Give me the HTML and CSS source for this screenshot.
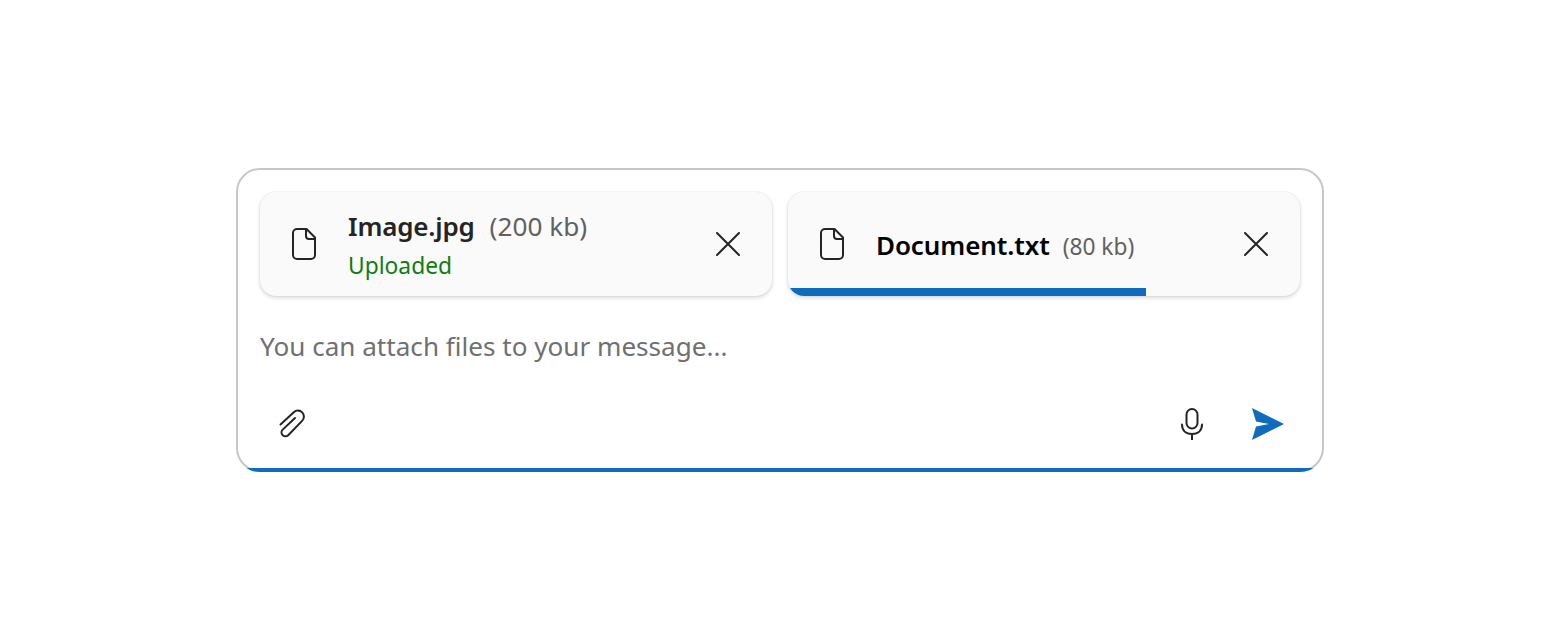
FILE: index.html
```html
<!DOCTYPE html>
<html lang="en">
<head>
<meta charset="utf-8">
<title>Message composer</title>
<link rel="stylesheet" href="styles.css">
</head>
<body>
<div class="composer">
  <div class="attachments">
    <div class="chip">
      <svg class="file-icon" viewBox="0 0 24 32" width="24" height="32" fill="none" stroke="#242424" stroke-width="2" stroke-linejoin="round"><path d="M5 1h9.500L23 9.500V27a4 4 0 0 1-4 4H5a4 4 0 0 1-4-4V5a4 4 0 0 1 4-4Z"/><path d="M14 1v7a3 3 0 0 0 3 3h6"/></svg>
      <div class="chip-body stacked">
        <div class="title-line"><span class="name">Image.jpg</span><span class="size">(200 kb)</span></div>
        <div class="status">Uploaded</div>
      </div>
      <svg class="close-icon" viewBox="0 0 24 24" width="24" height="24" fill="none" stroke="#242424" stroke-width="2" stroke-linecap="round"><path d="M1 1l22 22M23 1L1 23"/></svg>
    </div>
    <div class="chip">
      <svg class="file-icon" viewBox="0 0 24 32" width="24" height="32" fill="none" stroke="#242424" stroke-width="2" stroke-linejoin="round"><path d="M5 1h9.500L23 9.500V27a4 4 0 0 1-4 4H5a4 4 0 0 1-4-4V5a4 4 0 0 1 4-4Z"/><path d="M14 1v7a3 3 0 0 0 3 3h6"/></svg>
      <div class="chip-body">
        <div class="title-line compact"><span class="name dark">Document.txt</span><span class="size small">(80 kb)</span></div>
      </div>
      <svg class="close-icon" viewBox="0 0 24 24" width="24" height="24" fill="none" stroke="#242424" stroke-width="2" stroke-linecap="round"><path d="M1 1l22 22M23 1L1 23"/></svg>
      <div class="progress"></div>
    </div>
  </div>
  <div class="placeholder">You can attach files to your message...</div>
  <div class="toolbar">
    <svg class="clip" viewBox="0 0 26 30" width="26" height="30" fill="none" stroke="#242424" stroke-width="2" stroke-linecap="round"><path d="M1.500 15.500 14.800 3.200a6 6 0 0 1 8.400.200 6 6 0 0 1-.1 8.500L9.200 26.200a3.900 3.900 0 0 1-5.600-.1 3.900 3.900 0 0 1 .1-5.500L16 9"/></svg>
    <div class="spacer"></div>
    <svg class="mic" viewBox="0 0 22 32" width="22" height="32" fill="none" stroke="#242424" stroke-width="2" stroke-linecap="round"><rect x="5.500" y="1" width="11" height="19.500" rx="5.500"/><path d="M1 16.500C1 22.500 5 26 11 26s10-3.500 10-9.500M11 26v5.500"/></svg>
    <svg class="send" viewBox="0 0 32 32" width="32" height="32"><path d="M0 0 32 16 0 32 4 18.500 17 16 4 13.500Z" fill="#0f6cbd"/></svg>
  </div>
</div>
</body>
</html>
```
FILE: styles.css
```css
* { box-sizing: border-box; }
html, body { margin: 0; padding: 0; background: #fff; }
body {
  height: 640px;
  padding-top: 168px;
  font-family: "Noto Sans", "Open Sans", sans-serif;
}
.composer {
  position: relative;
  width: 1088px;
  height: 304px;
  margin: 0 auto;
  padding: 22px 22px 0;
  border: 2px solid #c7c7c7;
  border-radius: 24px;
  background: #fff;
}
.composer::after {
  content: "";
  position: absolute;
  inset: -2px;
  border-bottom: 4px solid #0f6cbd;
  border-radius: 24px;
  clip-path: inset(calc(100% - 4px) 0 0 0);
  pointer-events: none;
}
.attachments { display: flex; gap: 16px; }
.chip {
  position: relative;
  flex: 1;
  height: 104px;
  display: flex;
  align-items: center;
  padding: 0 32px;
  border-radius: 16px;
  background: #fafafa;
  box-shadow: 0 0 2px rgba(0,0,0,.12), 0 2px 4px rgba(0,0,0,.14);
  overflow: hidden;
}
.file-icon { flex: none; }
.chip-body { flex: 1; margin-left: 32px; padding-top: 4px; }
.chip-body.stacked { padding-top: 2px; }
.title-line { display: flex; align-items: baseline; gap: 15px; }
.title-line.compact { gap: 13px; }
.name { font-size: 26px; line-height: 36px; font-weight: 600; color: #242424; letter-spacing: -.2px; }
.name.dark { color: #000; letter-spacing: -.1px; }
.size { font-size: 26.200px; line-height: 36px; color: #616161; }
.size.small { font-size: 22.700px; }
.status { font-size: 22.800px; line-height: 32px; color: #107c10; margin-top: 6px; }
.close-icon { flex: none; }
.progress {
  position: absolute;
  left: 0;
  bottom: 0;
  width: 358px;
  height: 8px;
  background: #0f6cbd;
}
.placeholder {
  margin-top: 30px;
  font-size: 26.100px;
  line-height: 40px;
  color: #707070;
}
.toolbar {
  display: flex;
  align-items: center;
  height: 32px;
  margin-top: 42px;
  padding: 0 16px 0 19px;
}
.spacer { flex: 1; }
.send { margin-left: 49px; }
```
